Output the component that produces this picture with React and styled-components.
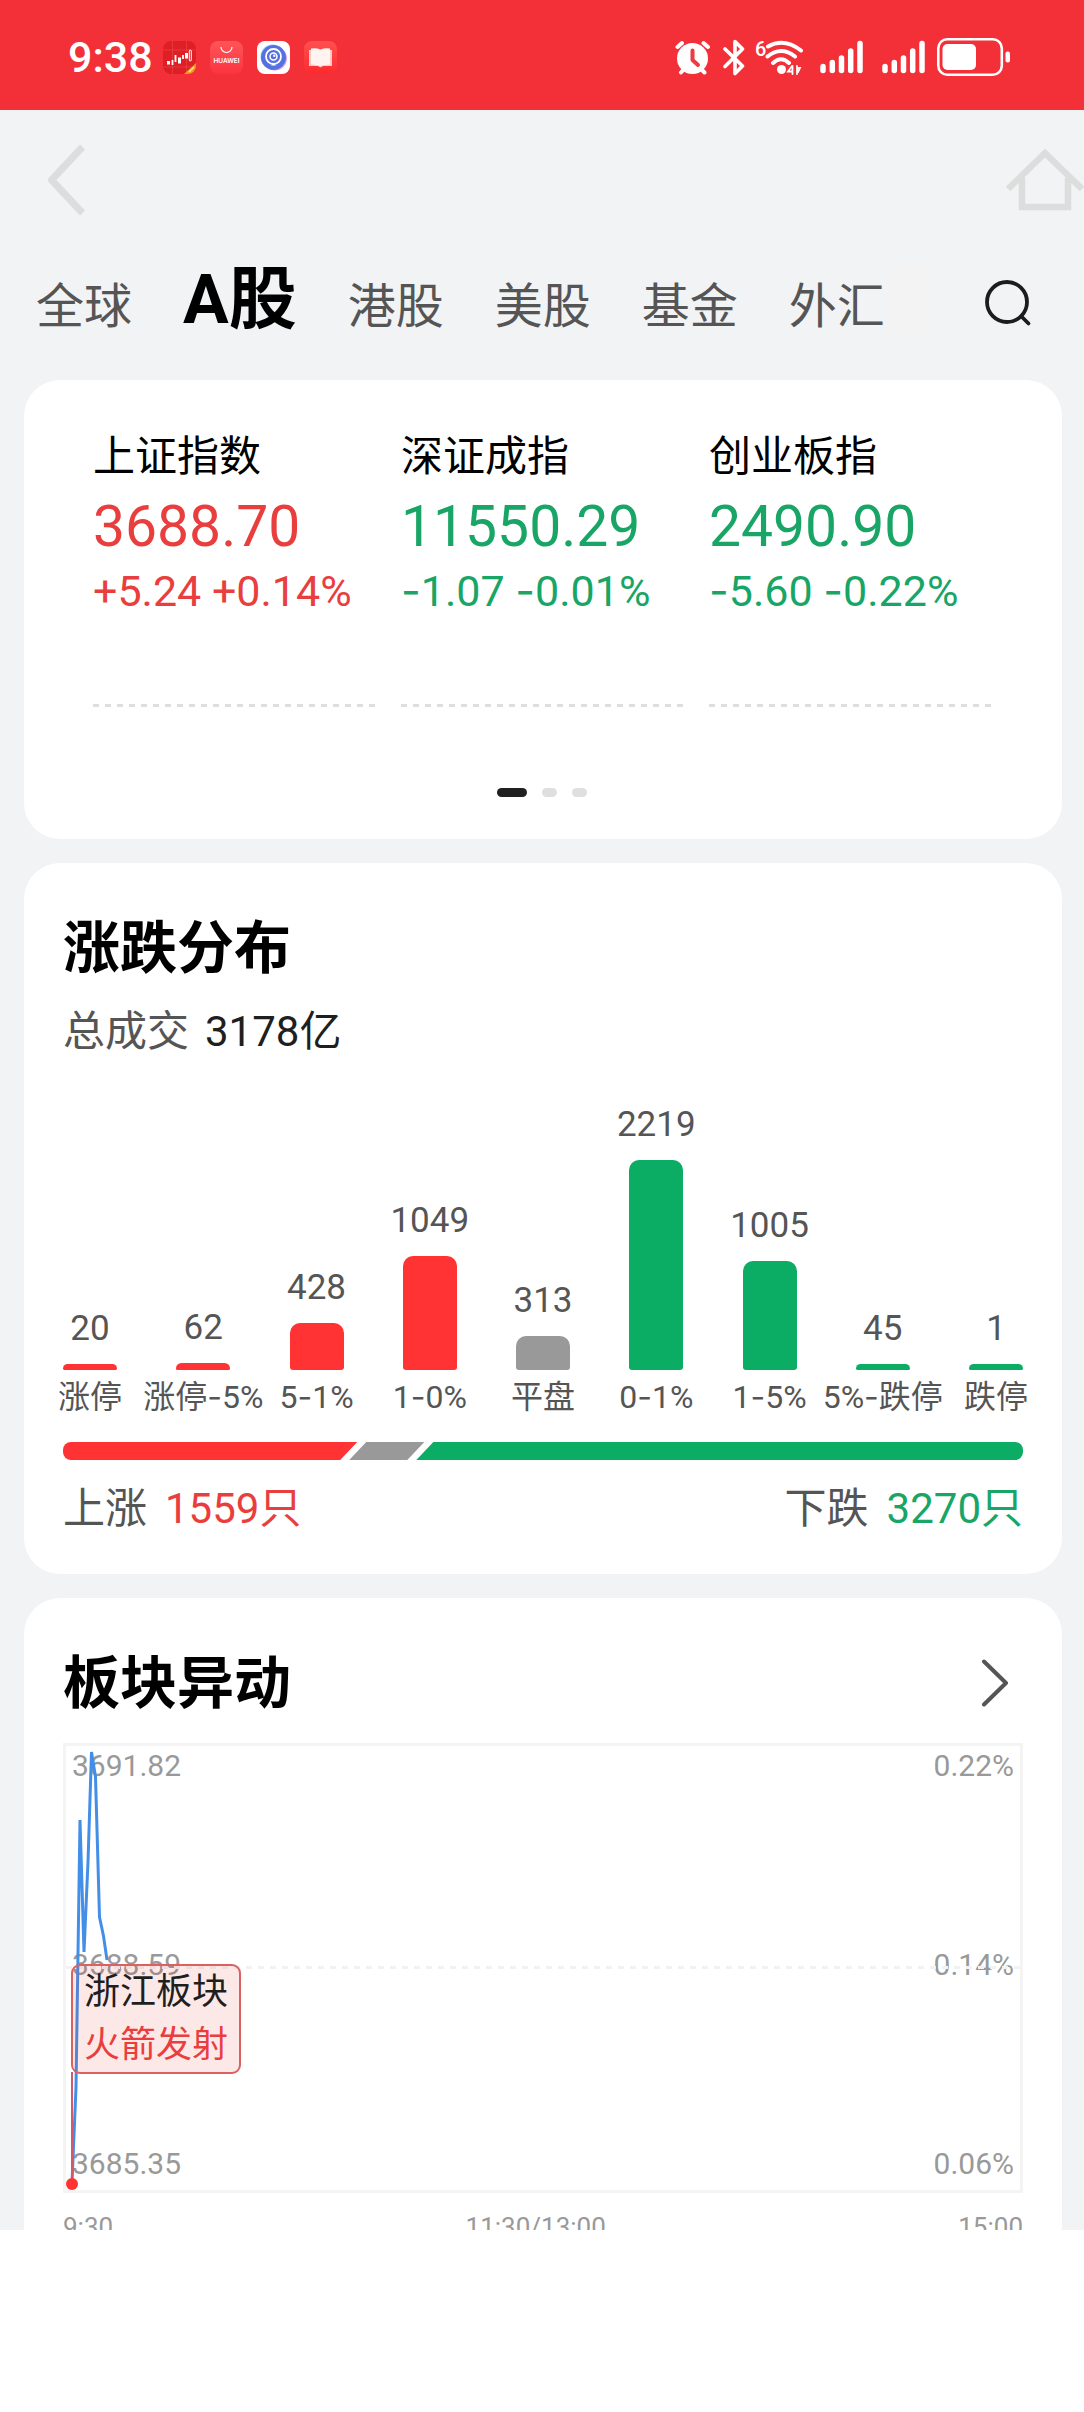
import React from "react";
import styled, { createGlobalStyle } from "styled-components";

const RED = "#ff3333";
const GREEN = "#0bac63";
const GREY = "#999999";
const tones = { up: RED, down: GREEN, flat: GREY };
const textTones = { up: "#e93e3e", down: "#18a566" };

const GlobalStyle = createGlobalStyle`
  * { box-sizing: border-box; }
  body {
    margin: 0;
    background: #ffffff;
    color: #1f1f1f;
    font-family: Roboto, "Noto Sans CJK SC", sans-serif;
    font-size: 42px;
  }
  button {
    margin: 0;
    padding: 0;
    border: 0;
    background: none;
    color: inherit;
    font: inherit;
    cursor: pointer;
  }
  h2, p, ul, dl, dd, dt { margin: 0; padding: 0; }
  ul { list-style: none; }
  svg { display: block; flex: none; }
`;

const Screen = styled.main`
  background: #f1f3f5;
`;

const StatusBar = styled.header`
  display: flex;
  align-items: center;
  justify-content: space-between;
  height: 110px;
  padding: 4px 73px 0 68px;
  background: #f32f38;
  color: #ffffff;
`;

const StatusGroup = styled.div`
  display: flex;
  align-items: center;
  gap: ${(p) => p.$gap}px;
`;

const Clock = styled.span`
  font-size: 43px;
  font-weight: 500;
  line-height: 52px;
  margin-right: -4px;
`;

const NavBar = styled.div`
  display: flex;
  align-items: center;
  justify-content: space-between;
  height: 140px;
  padding-left: 46px;
  color: #dcdddd;
`;

const TabBar = styled.nav`
  display: flex;
  justify-content: space-between;
  align-items: center;
  height: 130px;
  padding: 0 52px 24px 36px;
`;

const Tabs = styled.div`
  display: flex;
  align-items: baseline;
  gap: 51px;
`;

const Tab = styled.button`
  color: ${(p) => (p.$active ? "#000000" : "#555555")};
  font-size: ${(p) => (p.$active ? 68 : 48)}px;
  font-weight: ${(p) => (p.$active ? 700 : 400)};
  line-height: 90px;
  white-space: nowrap;
`;

const TabArea = styled.div`
  display: flex;
  align-items: center;
`;

const TabFade = styled.div`
  width: 44px;
  height: 74px;
  background: #f3f3f4;
`;

const Cards = styled.div`
  display: flex;
  flex-direction: column;
  gap: 24px;
  padding: 0 22px 0 24px;
`;

const Card = styled.section`
  padding: 46px 39px 35px;
  border-radius: 36px;
  background: #ffffff;
`;

const IndexCard = styled(Card)`
  padding: 47px 71px 42px 69px;
`;

const OpenCard = styled(Card)`
  padding-bottom: 0;
  border-radius: 36px 36px 0 0;
`;

const IndexGrid = styled.div`
  display: grid;
  grid-template-columns: repeat(3, 1fr);
  gap: 26px;
`;

const IndexItem = styled.article`
  color: ${(p) => textTones[p.$tone]};
  white-space: nowrap;
`;

const IndexName = styled.p`
  color: #000000;
  line-height: 60px;
`;

const IndexValue = styled.p`
  font-size: 57px;
  line-height: 80px;
`;

const IndexChange = styled.p`
  font-size: 43px;
  line-height: 48px;
`;

const DashedRule = styled.div`
  height: 3px;
  margin-top: 89px;
  background: repeating-linear-gradient(90deg, #dedede 0 6px, transparent 6px 12px);
`;

const Pager = styled.div`
  display: flex;
  justify-content: center;
  gap: 15px;
  margin-top: 81px;
`;

const PageDot = styled.button`
  width: ${(p) => (p.$active ? 30 : 15)}px;
  height: 9px;
  border-radius: 5px;
  background: ${(p) => (p.$active ? "#202020" : "#dfdfdf")};
`;

const CardHead = styled.div`
  display: flex;
  align-items: center;
  justify-content: space-between;
  padding-right: 14px;
`;

const Title = styled.h2`
  color: #000000;
  font-size: 57px;
  font-weight: 700;
  line-height: 80px;
`;

const Stat = styled.p`
  display: flex;
  gap: 18px;
  color: ${(p) => textTones[p.$tone] || "#1f1f1f"};
  line-height: 60px;
`;

const StatLabel = styled.span`
  color: #555555;
`;

const Turnover = styled(Stat)`
  gap: 16px;
  margin-top: 13px;
`;

const BarChart = styled.ul`
  display: flex;
  justify-content: space-between;
  align-items: flex-end;
  height: 355px;
`;

const BarColumn = styled.li`
  display: flex;
  flex-direction: column;
  align-items: center;
  width: 54px;
  color: #555555;
  white-space: nowrap;
`;

const BarValue = styled.span`
  font-size: 35px;
  line-height: 40px;
`;

const Bar = styled.div`
  width: 100%;
  margin: 15px 0 7px;
  border-radius: 10px 10px 3px 3px;
  background: ${(p) => tones[p.$tone]};
`;

const BarLabel = styled.span`
  font-size: 32px;
  line-height: 40px;
`;

const Ratio = styled.div`
  display: flex;
  height: 18px;
  margin-top: 25px;
  border-radius: 8px;
  overflow: hidden;
`;

const slants = {
  up: "polygon(0 0, 100% 0, calc(100% - 17px) 100%, 0 100%)",
  flat: "polygon(17px 0, 100% 0, calc(100% - 17px) 100%, 0 100%)",
  down: "polygon(17px 0, 100% 0, 100% 100%, 0 100%)",
};

const slantBasis = { up: 5, flat: 17, down: 0 };

const RatioPart = styled.div`
  flex: ${(p) => p.$count} 1 ${(p) => slantBasis[p.$tone]}px;
  background: ${(p) => tones[p.$tone]};
  clip-path: ${(p) => slants[p.$tone]};
  & + & { margin-left: -8px; }
`;

const Totals = styled.div`
  display: flex;
  justify-content: space-between;
  margin-top: 19px;
`;

const Plot = styled.div`
  position: relative;
  display: flex;
  justify-content: space-between;
  height: 450px;
  margin-top: 19px;
  padding: 0 6px 6px;
  border: 3px solid #f4f4f4;
`;

const Scale = styled.div`
  display: flex;
  flex-direction: column;
  justify-content: space-between;
  color: #999999;
  font-size: 30px;
  line-height: 40px;
`;

const PlotLines = styled.svg`
  position: absolute;
  inset: 0;
  width: 100%;
  height: 100%;
`;

const Callout = styled.div`
  position: absolute;
  left: 5px;
  top: 218px;
  padding: 0 11px;
  border: 2px solid #dc6060;
  border-radius: 9px;
  background: rgba(240, 50, 50, 0.11);
  font-size: 36px;
  line-height: 53px;
`;

const CalloutSignal = styled.p`
  color: ${textTones.up};
`;

const TimeAxis = styled.div`
  display: flex;
  justify-content: space-between;
  height: 37px;
  padding-top: 14px;
  overflow: hidden;
  color: #999999;
  font-size: 26px;
  line-height: 40px;
`;

const Dash = styled.span`
  font-family: Inter, sans-serif;
  line-height: 1;
`;

/* Roboto's hyphen is too short between figures, so it is set in Inter. */
function Figures({ text }) {
  return text.split("-").map((part, i) => (
    <React.Fragment key={i}>
      {i > 0 && <Dash>-</Dash>}
      {part}
    </React.Fragment>
  ));
}

function StockAppIcon() {
  return (
    <svg width="33" height="33" viewBox="0 0 33 33" aria-hidden="true">
      <defs>
        <clipPath id="stock-app"><rect width="33" height="33" rx="8" /></clipPath>
      </defs>
      <g clipPath="url(#stock-app)">
        <rect width="33" height="33" fill="#df1f26" />
        <path d="M0 9H33M0 26H33M9.500 0V33M23.500 0V33" stroke="#ea4a4c" strokeWidth="0.6" />
        <path d="M33 22V33H21Z" fill="#f39a1c" />
        <path d="M26 31L31 26" stroke="#ffe3a8" strokeWidth="1.6" />
        <g fill="#fff">
          <rect x="4" y="20" width="3" height="3.500" />
          <rect x="15" y="16.500" width="3" height="6" />
          <rect x="22" y="12" width="3" height="5.500" />
        </g>
        <path d="M9.500 19V24M12.500 14V21M20 14V18" stroke="#fff" strokeWidth="1.800" />
        <rect x="26.300" y="9" width="2" height="11" rx="1" fill="none" stroke="#fff" strokeWidth="1" />
      </g>
    </svg>
  );
}

function HuaweiAppIcon() {
  return (
    <svg width="33" height="33" viewBox="0 0 33 33" aria-hidden="true">
      <defs>
        <linearGradient id="huawei-app" x1="0" y1="0" x2="0" y2="1">
          <stop offset="0" stopColor="#ff5558" />
          <stop offset="1" stopColor="#fa3440" />
        </linearGradient>
      </defs>
      <rect width="33" height="33" rx="8" fill="url(#huawei-app)" />
      <path d="M11 6A5.500 5.500 0 0 0 22 6" fill="none" stroke="#fff" strokeWidth="1.200" />
      <text x="16.500" y="21.500" textAnchor="middle" fill="#fff" fontFamily="Inter, sans-serif" fontWeight="600" fontSize="6.500">HUAWEI</text>
    </svg>
  );
}

function CameraAppIcon() {
  return (
    <svg width="33" height="33" viewBox="0 0 33 33" aria-hidden="true">
      <rect width="33" height="33" rx="8" fill="#fff" />
      <circle cx="15.500" cy="15.500" r="12" fill="#8fd0f5" />
      <circle cx="18" cy="17.500" r="12" fill="#d6a5ee" />
      <circle cx="16.500" cy="16.500" r="12.500" fill="#5570e0" />
      <circle cx="16.500" cy="15.500" r="7.500" fill="none" stroke="#fff" strokeWidth="1.800" />
      <circle cx="16.500" cy="15.500" r="3.500" fill="none" stroke="#fff" strokeWidth="1.500" />
      <circle cx="17.300" cy="14.800" r="1.200" fill="#fff" />
      <path d="M14 24.500L16.500 22L19 24.500" fill="#fff" />
    </svg>
  );
}

function BookAppIcon() {
  return (
    <svg width="33" height="33" viewBox="0 0 33 33" aria-hidden="true">
      <defs>
        <linearGradient id="book-app" x1="0" y1="0" x2="0" y2="1">
          <stop offset="0" stopColor="#ff5150" />
          <stop offset="1" stopColor="#fd2a2c" />
        </linearGradient>
      </defs>
      <rect width="33" height="33" rx="8" fill="url(#book-app)" />
      <path d="M5 9H28V25H19L16.500 26.500L14 25H5Z" fill="#ffc9c7" />
      <path d="M7 7.500Q12 6.500 16.500 8.500Q21 6.500 26 7.500V23.500Q20 23.500 16.500 25Q13 23.500 7 23.500Z" fill="#fff4f0" />
    </svg>
  );
}

function AlarmIcon() {
  return (
    <svg width="38" height="38" viewBox="0 0 38 38" fill="none" stroke="#fff" strokeWidth="4" strokeLinecap="round" aria-hidden="true">
      <circle cx="17.500" cy="20.500" r="15.500" fill="#fff" stroke="none" />
      <path d="M2.500 9L7 5M28.500 5L33 9M6 34.500L9 31M29.500 34.500L26 31" />
      <path d="M17.500 12.500V22L23 27" stroke="#ee3b42" strokeLinejoin="round" />
    </svg>
  );
}

function BluetoothIcon() {
  return (
    <svg width="22" height="38" viewBox="0 0 22 38" fill="none" stroke="#fff" strokeWidth="3.600" strokeLinecap="round" strokeLinejoin="round" aria-hidden="true">
      <path d="M2 11L19.500 28L12 35.500V3.500L19.500 11L2 28.500" />
    </svg>
  );
}

function WifiIcon() {
  return (
    <svg width="55" height="38" viewBox="0 0 55 38" fill="none" stroke="#fff" strokeWidth="4" strokeLinecap="round" aria-hidden="true">
      <text x="0" y="18" fill="#fff" stroke="none" fontFamily="Roboto, sans-serif" fontWeight="500" fontSize="20">6</text>
      <path d="M13 8.500Q29 -0.500 46 12.500M12.500 18.500Q26 7.500 40 18.500M18 25Q26 17.500 34 25" />
      <circle cx="26.500" cy="31.500" r="4.500" fill="#fff" stroke="none" />
      <path d="M37.500 28V36M37 28L33 33.500H37M42 28V36M42 30H45L43 34" strokeWidth="1.800" />
    </svg>
  );
}

function SignalIcon({ width }) {
  return (
    <svg width={width} height="38" viewBox={`0 0 ${width} 38`} stroke="#fff" strokeWidth="5.500" strokeLinecap="round" aria-hidden="true">
      <path d="M3 28.500V32.500M12.300 24.500V32.500M21.500 20V32.500M30.700 13V32.500M40 5.500V32.500" />
    </svg>
  );
}

function BatteryIcon() {
  return (
    <svg width="74" height="38" viewBox="0 0 74 38" aria-hidden="true">
      <rect x="1.300" y="1.300" width="63.500" height="35.400" rx="9" fill="none" stroke="#fff" strokeWidth="2.600" />
      <rect x="5.500" y="6" width="33.500" height="26" rx="5" fill="#fff" />
      <rect x="68.500" y="13.500" width="4.500" height="11" rx="2" fill="#fff" />
    </svg>
  );
}

function BackIcon() {
  return (
    <svg width="40" height="72" viewBox="0 0 40 72" fill="none" stroke="currentColor" strokeWidth="7" aria-hidden="true">
      <path d="M36.500 3L5.500 36L36.500 69" strokeLinejoin="round" />
    </svg>
  );
}

function HomeIcon() {
  return (
    <svg width="78" height="64" viewBox="0 0 78 64" fill="none" stroke="currentColor" strokeWidth="6.500" aria-hidden="true">
      <path d="M2 41L39 5L76 41" />
      <path d="M16 30V59H62V30" />
    </svg>
  );
}

function SearchIcon() {
  return (
    <svg width="48" height="48" viewBox="0 0 48 48" fill="none" stroke="#1c1c1c" strokeWidth="3.800" strokeLinecap="round" aria-hidden="true">
      <circle cx="23" cy="23" r="20" />
      <path d="M37.500 37.500L44.500 44.500" />
    </svg>
  );
}

function MoreIcon() {
  return (
    <svg width="28" height="50" viewBox="0 0 28 50" fill="none" stroke="#555" strokeWidth="4" strokeLinecap="round" strokeLinejoin="round" aria-hidden="true">
      <path d="M3 2.500L25 24L3 45.500" />
    </svg>
  );
}

const tabNames = ["全球", "A股", "港股", "美股", "基金", "外汇"];

const indices = [
  { name: "上证指数", value: "3688.70", change: "+5.24 +0.14%", tone: "up" },
  { name: "深证成指", value: "11550.29", change: "-1.07 -0.01%", tone: "down" },
  { name: "创业板指", value: "2490.90", change: "-5.60 -0.22%", tone: "down" },
];

const distribution = [
  { label: "涨停", count: 20, tone: "up" },
  { label: "涨停-5%", count: 62, tone: "up" },
  { label: "5-1%", count: 428, tone: "up" },
  { label: "1-0%", count: 1049, tone: "up" },
  { label: "平盘", count: 313, tone: "flat" },
  { label: "0-1%", count: 2219, tone: "down" },
  { label: "1-5%", count: 1005, tone: "down" },
  { label: "5%-跌停", count: 45, tone: "down" },
  { label: "跌停", count: 1, tone: "down" },
];

/* Bars are capped at 210px; a small count keeps a 6px sliver. */
const barHeight = (count) => Math.min(210, Math.max(6, Math.round(count / 9.2)));

export default function App() {
  return (
    <>
      <GlobalStyle />
      <Screen>
        <StatusBar>
          <StatusGroup $gap={14}>
            <Clock>9:38</Clock>
            <StockAppIcon />
            <HuaweiAppIcon />
            <CameraAppIcon />
            <BookAppIcon />
          </StatusGroup>
          <StatusGroup $gap={10}>
            <AlarmIcon />
            <BluetoothIcon />
            <WifiIcon />
            <SignalIcon width={52} />
            <SignalIcon width={45} />
            <BatteryIcon />
          </StatusGroup>
        </StatusBar>

        <NavBar>
          <button aria-label="返回"><BackIcon /></button>
          <button aria-label="首页"><HomeIcon /></button>
        </NavBar>

        <TabBar>
          <TabArea>
            <Tabs>
              {tabNames.map((name) => (
                <Tab key={name} $active={name === "A股"}>{name}</Tab>
              ))}
            </Tabs>
            <TabFade />
          </TabArea>
          <button aria-label="搜索"><SearchIcon /></button>
        </TabBar>

        <Cards>
          <IndexCard>
            <IndexGrid>
              {indices.map((item) => (
                <IndexItem key={item.name} $tone={item.tone}>
                  <IndexName>{item.name}</IndexName>
                  <IndexValue>{item.value}</IndexValue>
                  <IndexChange><Figures text={item.change} /></IndexChange>
                  <DashedRule />
                </IndexItem>
              ))}
            </IndexGrid>
            <Pager>
              <PageDot $active aria-label="第1页" />
              <PageDot aria-label="第2页" />
              <PageDot aria-label="第3页" />
            </Pager>
          </IndexCard>

          <Card>
            <Title>涨跌分布</Title>
            <Turnover>
              <StatLabel>总成交</StatLabel>
              <span>3178亿</span>
            </Turnover>
            <BarChart>
              {distribution.map((d) => (
                <BarColumn key={d.label}>
                  <BarValue>{d.count}</BarValue>
                  <Bar $tone={d.tone} style={{ height: barHeight(d.count) }} />
                  <BarLabel><Figures text={d.label} /></BarLabel>
                </BarColumn>
              ))}
            </BarChart>
            <Ratio>
              <RatioPart $tone="up" $count={1559} />
              <RatioPart $tone="flat" $count={313} />
              <RatioPart $tone="down" $count={3270} />
            </Ratio>
            <Totals>
              <Stat $tone="up"><StatLabel>上涨</StatLabel><span>1559只</span></Stat>
              <Stat $tone="down"><StatLabel>下跌</StatLabel><span>3270只</span></Stat>
            </Totals>
          </Card>

          <OpenCard>
            <CardHead>
              <Title>板块异动</Title>
              <button aria-label="更多"><MoreIcon /></button>
            </CardHead>
            <Plot>
              <Scale>
                <span>3691.82</span>
                <span>3688.59</span>
                <span>3685.35</span>
              </Scale>
              <Scale>
                <span>0.22%</span>
                <span>0.14%</span>
                <span>0.06%</span>
              </Scale>
              <PlotLines fill="none" aria-hidden="true">
                <line x1="0" y1="221.500" x2="100%" y2="221.500" stroke="#f2f2f2" strokeWidth="3" strokeDasharray="6 6" />
                <polyline
                  points="6,437 10,341 14,74 18,206 22,116 25.500,6 29.500,31 33.500,171 37.500,190 41,214"
                  stroke="#438fe8"
                  strokeWidth="3"
                />
                <line x1="6" y1="326" x2="6" y2="438" stroke="#d05a68" strokeWidth="2" />
                <circle cx="6" cy="438" r="6" fill={RED} />
              </PlotLines>
              <Callout>
                <p>浙江板块</p>
                <CalloutSignal>火箭发射</CalloutSignal>
              </Callout>
            </Plot>
            <TimeAxis>
              <span>9:30</span>
              <span>11:30/13:00</span>
              <span>15:00</span>
            </TimeAxis>
          </OpenCard>
        </Cards>
      </Screen>
    </>
  );
}
